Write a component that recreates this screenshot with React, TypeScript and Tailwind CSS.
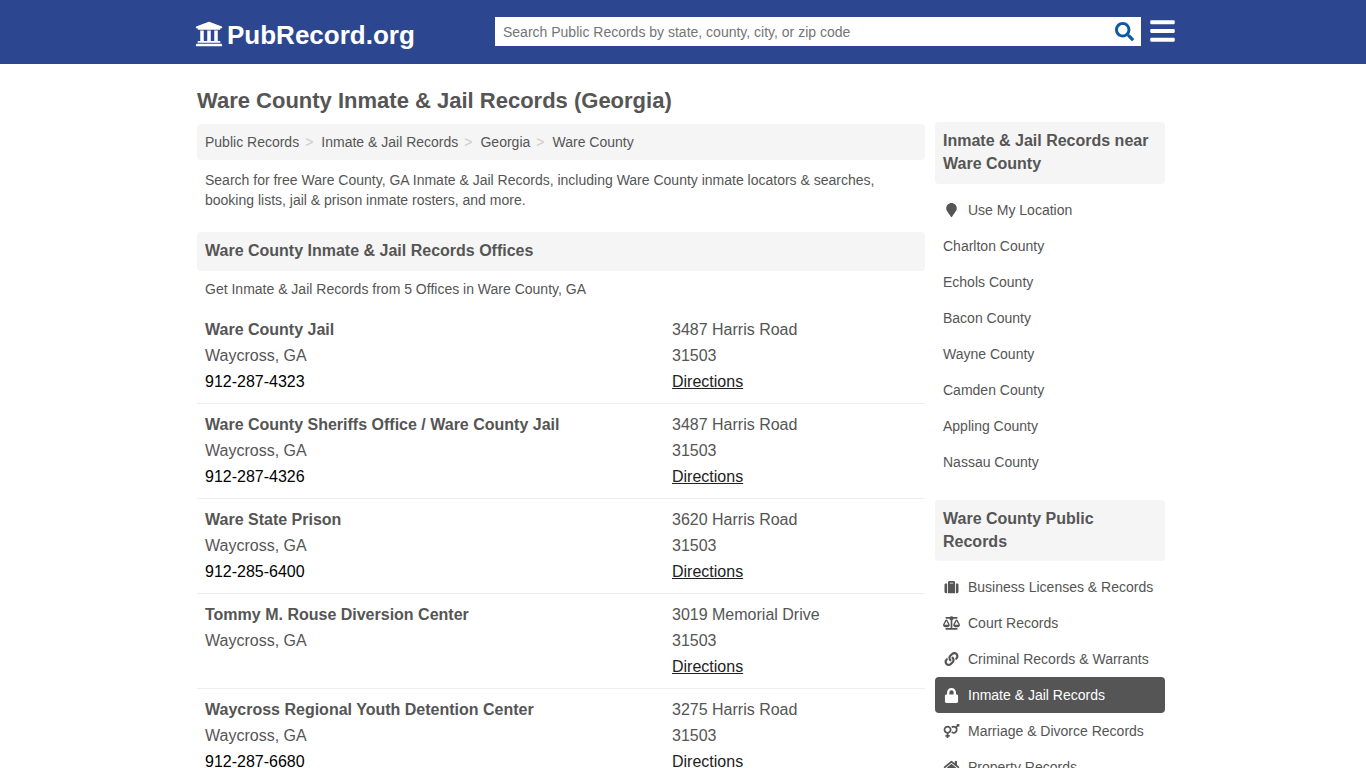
import { FaUniversity, FaSearch, FaBars, FaMapMarker, FaSuitcase, FaBalanceScale, FaLink, FaLock, FaVenusMars, FaHome } from "react-icons/fa";

const offices = [
  { name: "Ware County Jail", addr: "3487 Harris Road", phone: "912-287-4323" },
  { name: "Ware County Sheriffs Office / Ware County Jail", addr: "3487 Harris Road", phone: "912-287-4326" },
  { name: "Ware State Prison", addr: "3620 Harris Road", phone: "912-285-6400" },
  { name: "Tommy M. Rouse Diversion Center", addr: "3019 Memorial Drive", phone: "" },
  { name: "Waycross Regional Youth Detention Center", addr: "3275 Harris Road", phone: "912-287-6680" },
];

const crumbs = ["Public Records", "Inmate & Jail Records", "Georgia"];
const near = ["Charlton County", "Echols County", "Bacon County", "Wayne County", "Camden County", "Appling County", "Nassau County"];
const records = [
  { label: "Business Licenses & Records", Icon: FaSuitcase, size: "h-[14px] w-[17px]" },
  { label: "Court Records", Icon: FaBalanceScale, size: "h-[14px] w-[17px]" },
  { label: "Criminal Records & Warrants", Icon: FaLink, size: "h-[14px] w-[17px]" },
  { label: "Inmate & Jail Records", Icon: FaLock, size: "h-[15px] w-[17px]", active: true },
  { label: "Marriage & Divorce Records", Icon: FaVenusMars, size: "h-[14px] w-[17px]" },
  { label: "Property Records", Icon: FaHome, size: "h-[14px] w-[17px]" },
];

export default function App() {
  return (
    <div className="h-screen overflow-hidden bg-white font-['Liberation_Sans',Arial,sans-serif] text-[14px] text-[#555555]">
      <header className="h-16 bg-[#2d4690]">
        <div className="ml-[195px] flex h-16 w-[980px] items-start">
          <div className="flex h-16 w-[300px] items-center text-white">
            <FaUniversity className="mt-[4px] h-[28px] w-[28px]" />
            <span className="ml-[4px] mt-[6px] text-[26px] font-bold leading-[32px]">PubRecord.org</span>
          </div>
          <div className="mt-[17px] flex h-[29px] w-[646px] items-center justify-between bg-white pl-2 pr-[7px]">
            <span className="pt-[1px] text-[14px] text-[#757575]">Search Public Records by state, county, city, or zip code</span>
            <FaSearch className="h-[19px] w-[19px] text-[#0b5aa5]" />
          </div>
          <FaBars className="ml-[9px] mt-[17px] h-[28px] w-[25px] text-white" />
        </div>
      </header>
      <div className="ml-[197px] w-[968px]">
        <h1 className="mt-[23px] h-[27px] text-[22px] font-bold leading-[27px] text-[#555555]">Ware County Inmate &amp; Jail Records (Georgia)</h1>
        <div className="flex gap-[10px]">
          <main className="w-[728px]">
            <nav className="mt-[10px] flex h-9 items-center rounded bg-[#f5f5f5] px-2">
              {crumbs.map((c) => (
                <span key={c} className="flex items-center">
                  <span>{c}</span>
                  <span className="ml-[6px] mr-[8px] text-[#cccccc]">&gt;</span>
                </span>
              ))}
              <span>Ware County</span>
            </nav>
            <p className="mt-[10px] px-2 leading-[20px]">
              Search for free Ware County, GA Inmate &amp; Jail Records, including Ware County inmate locators &amp; searches, booking lists, jail &amp; prison inmate rosters, and more.
            </p>
            <h2 className="mt-[22px] flex h-[39px] items-center rounded bg-[#f5f5f5] px-2 pb-[2px] text-[16px] font-bold">Ware County Inmate &amp; Jail Records Offices</h2>
            <p className="mt-[8px] px-2 leading-[20px]">Get Inmate &amp; Jail Records from 5 Offices in Ware County, GA</p>
            <div className="mt-[10px]">
              {offices.map((o, i) => (
                <div key={o.name} className={`grid grid-cols-[475px_1fr] pb-[8px] pt-[8px] text-[16px] leading-[26px] ${i > 0 ? "border-t border-[#eeeeee]" : ""}`}>
                  <div className="pl-2">
                    <div className="font-bold">{o.name}</div>
                    <div>Waycross, GA</div>
                    {o.phone && <div className="text-black">{o.phone}</div>}
                  </div>
                  <div>
                    <div>{o.addr}</div>
                    <div>31503</div>
                    <div className="text-[#222222] underline">Directions</div>
                  </div>
                </div>
              ))}
            </div>
          </main>
          <aside className="w-[230px]">
            <h3 className="mt-[8px] rounded bg-[#f5f5f5] px-2 pb-[9px] pt-[7px] text-[16px] font-bold leading-[23px]">Inmate &amp; Jail Records near Ware County</h3>
            <ul className="mt-[8px]">
              <li className="flex h-9 items-center px-2">
                <FaMapMarker className="ml-[3px] mr-[11px] h-[14px] w-[11px]" />
                Use My Location
              </li>
              {near.map((n) => (
                <li key={n} className="flex h-9 items-center px-2">{n}</li>
              ))}
            </ul>
            <h3 className="mt-[20px] rounded bg-[#f5f5f5] px-2 pb-[8px] pt-[7px] text-[16px] font-bold leading-[23px]">Ware County Public Records</h3>
            <ul className="mt-[8px]">
              {records.map(({ label, Icon, size, active }) => (
                <li key={label} className={`flex h-9 items-center rounded px-2 ${active ? "bg-[#555555] text-white" : ""}`}>
                  <span className="mr-[8px] flex w-[17px] justify-center">
                    <Icon className={size} />
                  </span>
                  {label}
                </li>
              ))}
            </ul>
          </aside>
        </div>
      </div>
    </div>
  );
}
